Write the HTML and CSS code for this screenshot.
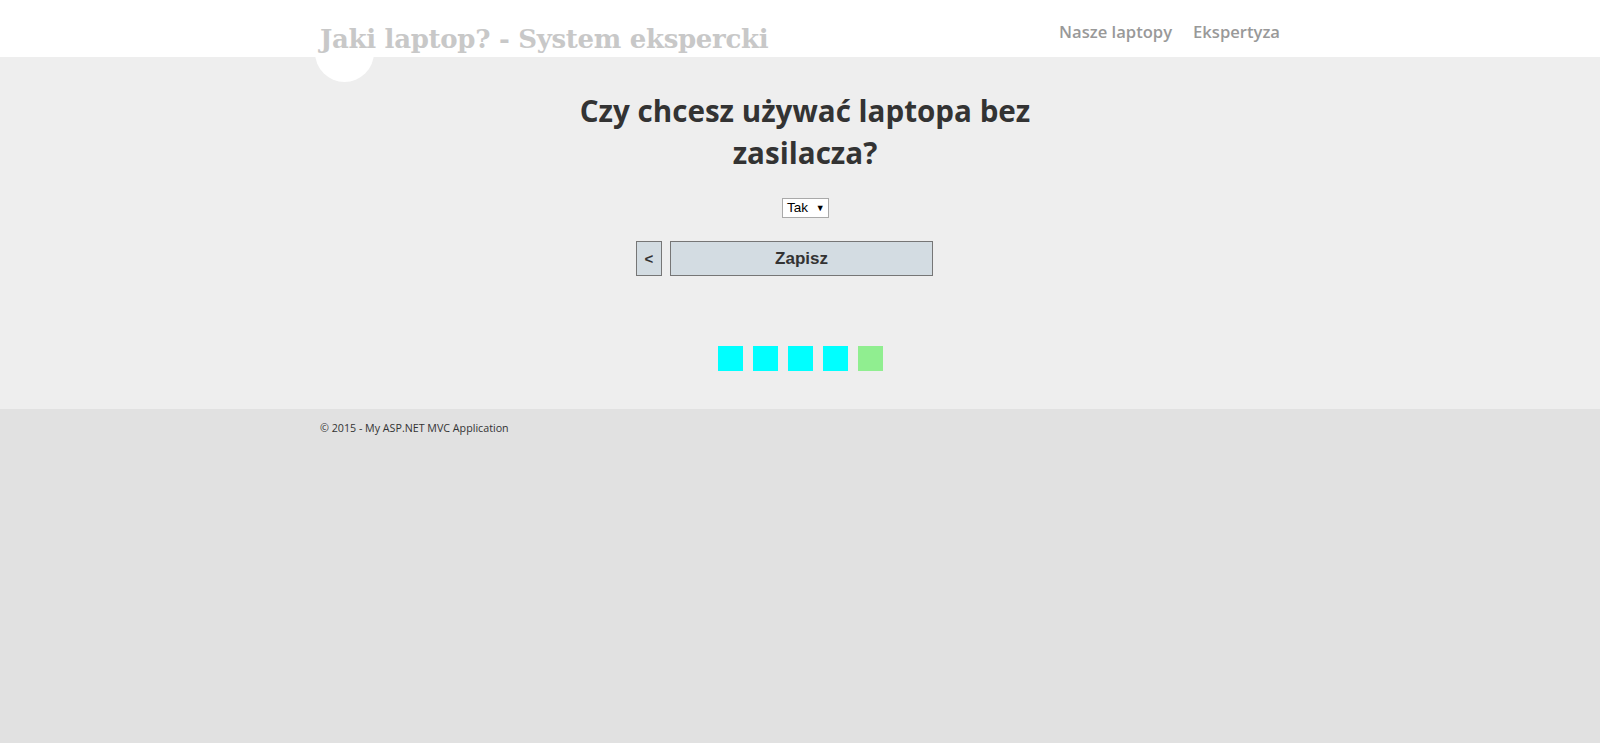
FILE: index.html
```html
<!DOCTYPE html>
<html lang="pl">
<head>
<meta charset="utf-8">
<title>Jaki laptop? - System ekspercki</title>
<link rel="stylesheet" href="styles.css">
</head>
<body>
<header class="site-header">
  <div class="container header-inner">
    <a class="brand" href="#">Jaki laptop? - System ekspercki</a>
    <nav class="nav">
      <a href="#">Nasze laptopy</a>
      <a href="#">Ekspertyza</a>
    </nav>
  </div>
</header>
<main class="main">
  <div class="container main-inner">
    <h2 class="question">Czy chcesz używać laptopa bez zasilacza?</h2>
    <div class="select-row">
      <div class="select">Tak <span class="arrow">▼</span></div>
    </div>
    <div class="buttons">
      <button class="btn btn-back" type="button">&lt;</button>
      <button class="btn btn-save" type="submit">Zapisz</button>
    </div>
    <div class="progress">
      <span class="sq done"></span>
      <span class="sq done"></span>
      <span class="sq done"></span>
      <span class="sq done"></span>
      <span class="sq current"></span>
    </div>
  </div>
</main>
<footer class="footer">
  <div class="container">
    <p class="copy">© 2015 - My ASP.NET MVC Application</p>
  </div>
</footer>
</body>
</html>
```

FILE: styles.css
```css
html, body {
  margin: 0;
  padding: 0;
  height: 100%;
}
body {
  background: #e1e1e1;
  font-family: "Open Sans", "Noto Sans", sans-serif;
  color: #333;
}
.container {
  width: 960px;
  margin: 0 auto;
}
.site-header {
  position: relative;
  z-index: 1;
  background: #fff;
  height: 57px;
}
.header-inner {
  display: flex;
  justify-content: space-between;
  align-items: flex-start;
  height: 57px;
}
.brand {
  position: relative;
  display: block;
  margin-top: 22px;
  font-family: "DejaVu Serif", serif;
  font-weight: bold;
  font-size: 26px;
  line-height: 34px;
  color: #c8c8c8;
  text-decoration: none;
  letter-spacing: -0.3px;
}
.brand::before {
  content: "";
  position: absolute;
  z-index: -1;
  left: -5px;
  top: 1px;
  width: 59px;
  height: 59px;
  border-radius: 50%;
  background: #fff;
}
.nav {
  display: flex;
  gap: 21px;
  margin-top: 20px;
}
.nav a {
  font-size: 16.6px;
  line-height: 24px;
  color: #999;
  text-decoration: none;
  font-weight: 600;
}
.main {
  background: #eee;
  height: 352px;
}
.main-inner {
  display: flex;
  flex-direction: column;
  align-items: center;
  padding-top: 33px;
}
.question {
  width: 480px;
  margin: 0 0 0 10px;
  text-align: center;
  font-size: 29.6px;
  line-height: 42px;
  font-weight: 700;
  color: #333;
}
.select-row {
  margin: 24px 0 0 11px;
}
.select {
  box-sizing: border-box;
  width: 47px;
  height: 20px;
  background: #fff;
  border: 1px solid #a9a9a9;
  font-family: "Liberation Sans", Arial, sans-serif;
  font-size: 13.5px;
  line-height: 18px;
  color: #000;
  padding-left: 4px;
}
.arrow {
  font-size: 9px;
  margin-left: 4px;
  vertical-align: 1px;
}
.buttons {
  display: flex;
  gap: 8px;
  margin-top: 23px;
  padding-right: 31px;
}
.btn {
  box-sizing: border-box;
  height: 35px;
  background: #d3dce2;
  border: 1px solid #767676;
  font-family: "Liberation Sans", Arial, sans-serif;
  font-weight: bold;
  font-size: 17px;
  color: #333;
  padding: 0;
}
.btn-back {
  width: 26px;
  font-size: 15px;
}
.btn-save {
  width: 263px;
}
.progress {
  display: flex;
  gap: 10px;
  margin-top: 70px;
}
.sq {
  width: 25px;
  height: 25px;
}
.sq.done {
  background: #00ffff;
}
.sq.current {
  background: #90ee90;
}
.footer .copy {
  margin: 0;
  padding-top: 10px;
  font-size: 10.7px;
  line-height: 18px;
  color: #333;
}
```
